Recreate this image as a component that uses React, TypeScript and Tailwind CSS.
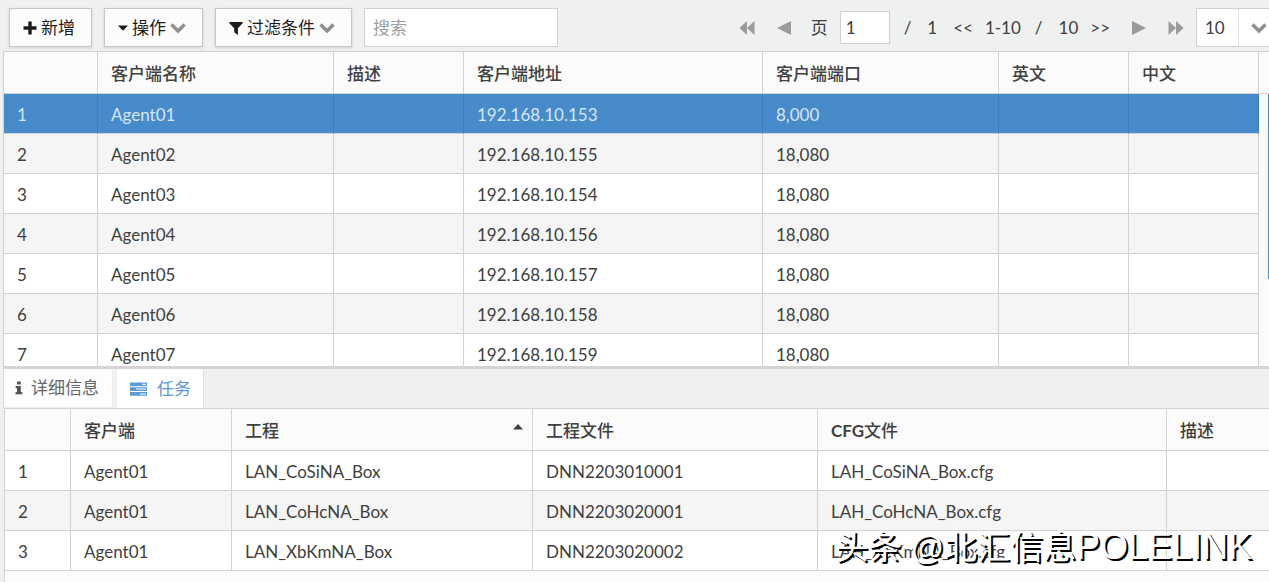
import React from 'react';

const agents = [
  { name: 'Agent01', address: '192.168.10.153', port: '8,000' },
  { name: 'Agent02', address: '192.168.10.155', port: '18,080' },
  { name: 'Agent03', address: '192.168.10.154', port: '18,080' },
  { name: 'Agent04', address: '192.168.10.156', port: '18,080' },
  { name: 'Agent05', address: '192.168.10.157', port: '18,080' },
  { name: 'Agent06', address: '192.168.10.158', port: '18,080' },
  { name: 'Agent07', address: '192.168.10.159', port: '18,080' },
];

const tasks = [
  { client: 'Agent01', project: 'LAN_CoSiNA_Box', file: 'DNN2203010001', cfg: 'LAH_CoSiNA_Box.cfg' },
  { client: 'Agent01', project: 'LAN_CoHcNA_Box', file: 'DNN2203020001', cfg: 'LAH_CoHcNA_Box.cfg' },
  { client: 'Agent01', project: 'LAN_XbKmNA_Box', file: 'DNN2203020002', cfg: 'LAH_XbKmNA_Box.cfg' },
];

const buttonClass =
  'flex h-[39px] shrink-0 items-center border border-[#c4c7c6] bg-[#fcfcfc] text-[#1c1c1c] shadow-[0_1px_3px_rgba(0,0,0,0.12)]';
const headClass = 'h-[42px] border-r border-b border-[#d2d2d2] px-[13px] pt-[2px] text-left font-medium text-[#404040]';
const cellBase = 'h-10 border-r border-b px-[13px] pt-[2px] whitespace-nowrap';
const cellClass = cellBase + ' border-[#d2d2d2]';
const selectedCellClass = cellBase + ' border-r-[#3f7db8] border-b-[#d2d2d2]';

function Chevron() {
  return (
    <svg width="16" height="12" viewBox="0 0 16 12" fill="none" stroke="#8f8f8f" strokeWidth="3.4" aria-hidden="true">
      <path d="M1.5 2.5 8 9l6.500-6.500" />
    </svg>
  );
}

function DoubleArrow({ flip = false }: { flip?: boolean }) {
  return (
    <svg width="16" height="14" viewBox="0 0 16 14" fill="#9b9b9b" aria-hidden="true" className={flip ? 'rotate-180' : ''}>
      <path d="M8 0v14L.5 7zM15.500 0v14L8 7z" />
    </svg>
  );
}

function Arrow({ flip = false }: { flip?: boolean }) {
  return (
    <svg width="14" height="14" viewBox="0 0 14 14" fill="#9b9b9b" aria-hidden="true" className={flip ? 'rotate-180' : ''}>
      <path d="M14 0v14L0 7z" />
    </svg>
  );
}

function Toolbar() {
  return (
    <div className="flex h-[51px] items-center pt-[4px] pl-[9px]">
      <button type="button" className={buttonClass + ' w-[83px] gap-1 pl-[13px]'}>
        <svg width="14" height="14" viewBox="0 0 14 14" fill="#1c1c1c" aria-hidden="true">
          <path d="M5.300.5h3.400v4.800h4.800v3.400H8.700v4.800H5.300V8.700H.5V5.300h4.800z" />
        </svg>
        新增
      </button>
      <button type="button" className={buttonClass + ' ml-3 w-[99px] gap-1 pl-[13px]'}>
        <svg width="10" height="6" viewBox="0 0 10 6" fill="#1c1c1c" aria-hidden="true">
          <path d="M0 .5h10L5 5.800z" />
        </svg>
        操作
        <Chevron />
      </button>
      <button type="button" className={buttonClass + ' ml-3 w-[137px] gap-1 pl-[13px]'}>
        <svg width="14" height="14" viewBox="0 0 14 14" fill="#1c1c1c" aria-hidden="true">
          <path d="M.4 1h13.200v1.200L8.900 7.200V14L5.200 11.300V7.200L.4 2.200z" />
        </svg>
        过滤条件
        <Chevron />
      </button>
      <input
        type="search"
        aria-label="搜索"
        placeholder="搜索"
        className="ml-3 h-[39px] w-[194px] min-w-0 border border-[#cfd1d0] bg-white px-2 placeholder:text-[#a0a0a0] outline-none"
      />
      <nav aria-label="分页" className="ml-auto flex shrink-0 items-center">
        <button type="button" aria-label="首页" className="w-4"><DoubleArrow /></button>
        <button type="button" aria-label="上一页" className="ml-[22px]"><Arrow /></button>
        <label htmlFor="page" className="ml-5">页</label>
        <input id="page" defaultValue="1" className="ml-3 h-[33px] w-[50px] border border-[#cfd1d0] bg-white px-[5px] outline-none" />
        <span className="ml-[14px]">/</span>
        <span className="ml-4">1</span>
        <span className="ml-4">&lt;&lt;</span>
        <span className="ml-3">1-10</span>
        <span className="ml-[14px]">/</span>
        <span className="ml-4">10</span>
        <span className="ml-3">&gt;&gt;</span>
        <button type="button" aria-label="下一页" className="ml-[22px]"><Arrow flip /></button>
        <button type="button" aria-label="末页" className="ml-[22px]"><DoubleArrow flip /></button>
        <div className="relative ml-3 h-[39px] w-[73px] border-y border-l border-[#cfd1d0] bg-white">
          <select aria-label="每页行数" className="h-full w-full appearance-none bg-transparent pl-2 outline-none">
            <option>10</option>
            <option>20</option>
          </select>
          <div className="pointer-events-none absolute top-0 right-0 flex h-full w-[31px] items-center border-l border-[#e3e3e3] pl-3">
            <Chevron />
          </div>
        </div>
      </nav>
    </div>
  );
}

function AgentGrid() {
  return (
    <div className="ml-[3px] flex h-[315px] overflow-hidden border-t border-l border-[#cfcfcf] bg-[#fbfbfb]">
      <table className="w-[1255px] shrink-0 table-fixed border-separate border-spacing-0">
        <colgroup>
          <col className="w-[94px]" />
          <col className="w-[236px]" />
          <col className="w-[130px]" />
          <col className="w-[299px]" />
          <col className="w-[236px]" />
          <col className="w-[130px]" />
          <col className="w-[130px]" />
        </colgroup>
        <thead>
          <tr>
            <th className={headClass} aria-label="序号" />
            {['客户端名称', '描述', '客户端地址', '客户端端口', '英文', '中文'].map((t) => (
              <th key={t} scope="col" className={headClass}>{t}</th>
            ))}
          </tr>
        </thead>
        <tbody>
          {agents.map((a, i) => {
            const c = i === 0 ? selectedCellClass : cellClass;
            const row = i === 0 ? 'bg-[#478bca] text-[#d5e6f5]' : i % 2 ? 'bg-[#f5f5f5]' : 'bg-white';
            return (
              <tr key={a.name} className={row} aria-selected={i === 0}>
                <td className={c}>{i + 1}</td>
                <td className={c}>{a.name}</td>
                <td className={c} />
                <td className={c}>{a.address}</td>
                <td className={c}>{a.port}</td>
                <td className={c} />
                <td className={c} />
              </tr>
            );
          })}
        </tbody>
      </table>
      <div className="flex flex-1 flex-col items-end">
        <div className="h-[42px] w-full shrink-0 border-b border-[#d2d2d2]" />
        <div className="h-[185px] w-px bg-[#478bca]" />
      </div>
    </div>
  );
}

function Tabs() {
  return (
    <div role="tablist" className="ml-[3px] flex h-[39px] gap-[5px] border-l border-[#dcdcdc]">
      <button type="button" role="tab" aria-selected="false" className="flex h-[38px] w-[108px] items-center gap-2 bg-[#fdfdfd] pl-[11px] text-[#666]">
        <svg width="8" height="14" viewBox="0 0 8 14" fill="#555" aria-hidden="true">
          <path d="M2 .5h3.800v3H2zM.7 5h5.100v6h1.500v2.300H.5V11H2V7.200H.7z" />
        </svg>
        详细信息
      </button>
      <button type="button" role="tab" aria-selected="true" className="flex h-[39px] w-[87px] items-center gap-[10px] border-r border-[#dcdfde] bg-white pl-[13px] text-[#5a9ad5]">
        <svg width="17" height="14" viewBox="0 0 17 14" aria-hidden="true">
          <path fill="#5a9ad5" d="M0 .5h17v3.700H0zM0 5.300h17V9H0zM0 10.100h17v3.700H0z" />
          <path fill="#fff" d="M12 1.800h4v1h-4zM6 6.600h10v1H6zM10 11.400h6v1h-6z" />
        </svg>
        任务
      </button>
    </div>
  );
}

function TaskGrid() {
  return (
    <div className="ml-1 flex-1 overflow-hidden border-t border-l border-[#d2d2d2] bg-[#fbfbfb]">
      <table className="w-full table-fixed border-separate border-spacing-0">
        <colgroup>
          <col className="w-[66px]" />
          <col className="w-[161px]" />
          <col className="w-[301px]" />
          <col className="w-[285px]" />
          <col className="w-[349px]" />
          <col />
        </colgroup>
        <thead>
          <tr>
            <th className={headClass} aria-label="序号" />
            <th scope="col" className={headClass}>客户端</th>
            <th scope="col" aria-sort="ascending" className={headClass}>
              <div className="flex items-center justify-between">
                工程
                <svg width="10" height="14" viewBox="0 0 10 14" fill="#404040" aria-hidden="true" className="-mr-1">
                  <path d="M0 5.500 5 0l5 5.500z" />
                </svg>
              </div>
            </th>
            <th scope="col" className={headClass}>工程文件</th>
            <th scope="col" className={headClass}><span className="font-bold">CFG</span>文件</th>
            <th scope="col" className={headClass + ' border-r-0'}>描述</th>
          </tr>
        </thead>
        <tbody>
          {tasks.map((t, i) => (
            <tr key={t.file} className={i % 2 ? 'bg-[#f5f5f5]' : 'bg-white'}>
              <td className={cellClass}>{i + 1}</td>
              <td className={cellClass}>{t.client}</td>
              <td className={cellClass}>{t.project}</td>
              <td className={cellClass}>{t.file}</td>
              <td className={cellClass}>{t.cfg}</td>
              <td className={cellClass + ' border-r-0'} />
            </tr>
          ))}
        </tbody>
      </table>
    </div>
  );
}

export default function App() {
  return (
    <main className="relative flex min-h-screen flex-col overflow-hidden bg-[#eff1f0] font-['Lato','Noto_Sans_CJK_SC',sans-serif] text-[17px] leading-6 text-[#404040]">
      <Toolbar />
      <AgentGrid />
      <div className="ml-[3px] h-[3px] bg-[#d4d4d4]" />
      <Tabs />
      <TaskGrid />
      <div className="pointer-events-none absolute right-[17px] bottom-[14px] flex items-baseline font-['Liberation_Sans','Noto_Sans_CJK_SC',sans-serif] text-[33px] leading-10 whitespace-nowrap text-white [text-shadow:2px_2px_0_#000]">
        <span>头条 @北汇信息</span>
        <span className="text-[36px]">POLELINK</span>
      </div>
    </main>
  );
}
